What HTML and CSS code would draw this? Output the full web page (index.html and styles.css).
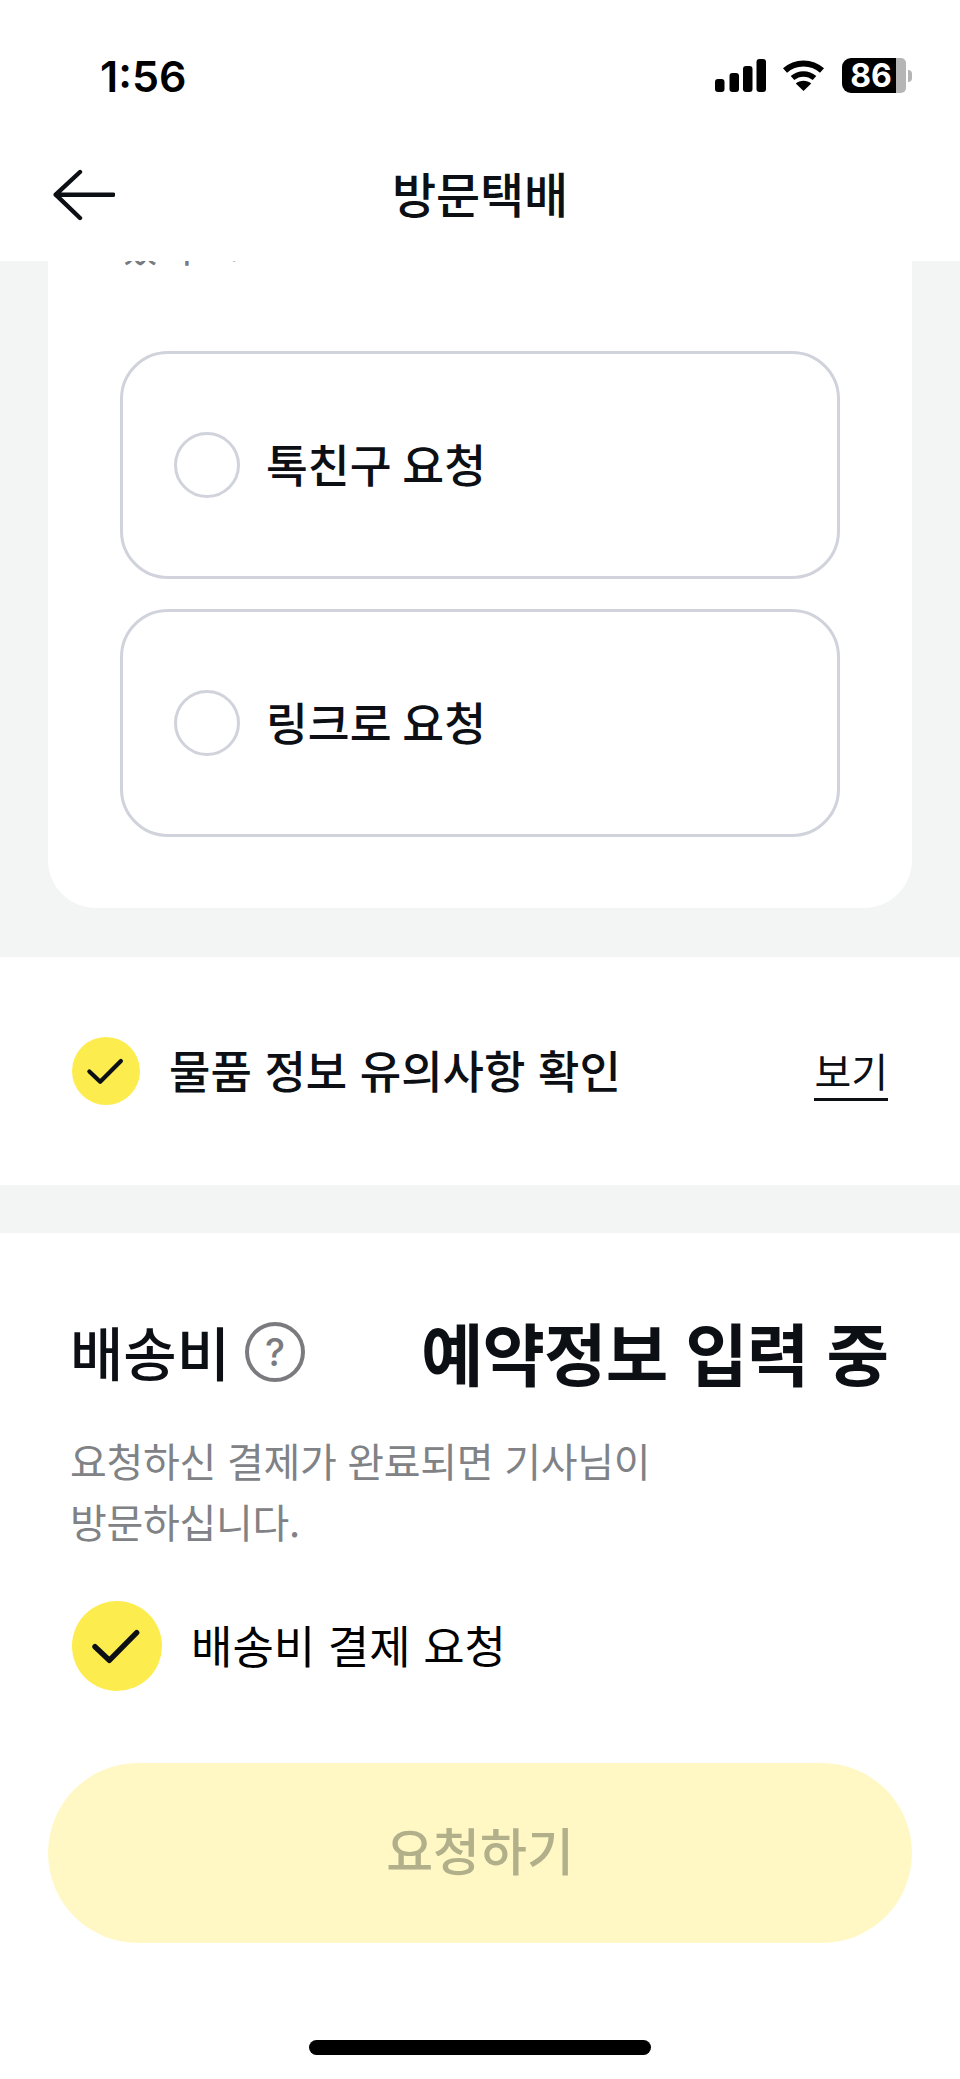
FILE: index.html
```html
<!DOCTYPE html>
<html lang="ko">
<head>
<meta charset="utf-8">
<title>방문택배</title>
<link rel="stylesheet" href="styles.css">
</head>
<body>
<div class="screen">
  <header class="top">
    <div class="status">
      <span class="time">1:56</span>
      <div class="status-icons">
        <svg class="signal" width="51" height="33" viewBox="0 0 51 33"><rect x="0" y="20" width="9.500" height="13" rx="3"/><rect x="14.500" y="14" width="9.500" height="19" rx="3"/><rect x="28" y="7" width="9.500" height="26" rx="3"/><rect x="41.500" y="0" width="9.500" height="33" rx="3"/></svg>
        <svg class="wifi" width="43" height="31" viewBox="0 0 43 31"><path d="M3 10.500C13.500 1 29.500 1 40 10.500" fill="none" stroke="#000" stroke-width="6"/><path d="M10.500 18C17 12.500 26 12.500 32.500 18" fill="none" stroke="#000" stroke-width="5.500"/><path d="M21.500 31L13.800 23.500C18 19.800 25 19.800 29.200 23.500Z"/></svg>
        <div class="battery"><div class="battery-body"><span class="battery-num">86</span><span class="battery-rest"></span></div><span class="battery-nub"></span></div>
      </div>
    </div>
    <div class="nav">
      <svg class="back" width="62" height="52" viewBox="0 0 62 52"><path d="M27 3L2.700 25.700L27 49M2.700 25.700H60.300" fill="none" stroke="#0c0f14" stroke-width="4.400" stroke-linecap="round" stroke-linejoin="round"/></svg>
      <h1 class="title">방문택배</h1>
    </div>
  </header>

  <main class="content">
    <section class="gray-area">
      <div class="card">
        <p class="clipped">있어요.</p>
        <div class="option"><span class="radio"></span><span class="option-label">톡친구 요청</span></div>
        <div class="option"><span class="radio"></span><span class="option-label">링크로 요청</span></div>
      </div>
    </section>

    <section class="notice">
      <span class="check check-sm"><svg class="tick" viewBox="0 0 90 90"><path d="M23 45.700L37.300 59.300L64.700 31.700" fill="none" stroke="#0c0f14" stroke-linecap="round" stroke-linejoin="round"/></svg></span>
      <span class="notice-text">물품 정보 유의사항 확인</span>
      <a class="view">보기</a>
    </section>

    <section class="fee">
      <div class="fee-head">
        <h2 class="fee-title">배송비</h2>
        <span class="help">?</span>
        <span class="fee-status">예약정보 입력 중</span>
      </div>
      <p class="fee-desc">요청하신 결제가 완료되면 기사님이<br>방문하십니다.</p>
      <div class="fee-check">
        <span class="check check-lg"><svg class="tick" viewBox="0 0 90 90"><path d="M23 45.700L37.300 59.300L64.700 31.700" fill="none" stroke="#0c0f14" stroke-linecap="round" stroke-linejoin="round"/></svg></span>
        <span class="fee-check-text">배송비 결제 요청</span>
      </div>
      <button class="submit">요청하기</button>
      <div class="home-bar"></div>
    </section>
  </main>
</div>
</body>
</html>
```
FILE: styles.css
```css
* { box-sizing: border-box; }
html, body { margin: 0; padding: 0; background: #fff; }
body { font-family: "Noto Sans CJK KR", "Noto Sans", sans-serif; color: #0c0f14; }
.screen { width: 960px; height: 2079px; overflow: hidden; display: flex; flex-direction: column; }

.top { height: 261px; flex: none; background: #fff; position: relative; z-index: 2; }
.status { height: 150px; padding: 0 48px 0 100px; display: flex; justify-content: space-between; align-items: flex-start; }
.time { font-family: Inter, "Liberation Sans", sans-serif; font-weight: 600; font-size: 43px; line-height: 50px; margin-top: 51px; color: #000; }
.status-icons { display: flex; align-items: flex-start; margin-top: 58px; }
.signal { margin-top: 1px; margin-right: 16px; }
.wifi { margin-top: 2px; margin-right: 17px; }
.battery { display: flex; align-items: center; height: 35px; }
.battery-body { width: 64px; height: 35px; display: flex; }
.battery-num { width: 54px; flex: none; border-radius: 9px 0 0 9px; background: #000; color: #fff; font-family: Inter, "Liberation Sans", sans-serif; font-weight: 700; font-size: 32px; line-height: 35px; text-align: center; padding-left: 4px; }
.battery-rest { width: 10px; flex: none; border-radius: 0 5px 5px 0; background: #b5b5b5; }
.battery-nub { width: 4px; height: 12px; margin-left: 2px; border-radius: 0 6px 6px 0; background: #b5b5b5; }

.nav { height: 111px; display: flex; align-items: flex-start; justify-content: center; position: relative; }
.back { position: absolute; left: 53px; top: 19px; }
.title { margin: 7px 0 0; font-size: 48px; line-height: 70px; font-weight: 500; letter-spacing: -0.2px; }

.content { flex: 1; display: flex; flex-direction: column; background: #f3f5f4; }
.gray-area { height: 696px; flex: none; padding: 0 48px; overflow: hidden; }
.card { display: flow-root; height: 647px; padding: 0 72px; background: #fff; border-radius: 0 0 48px 48px; }
.clipped { margin: -39px 0 0; height: 129px; font-size: 40px; line-height: 46px; color: #777a80; padding-left: 1px; letter-spacing: -1px; }
.option { height: 228px; margin-bottom: 30px; border: 3px solid #d1d3dc; border-radius: 48px; display: flex; align-items: center; padding-left: 51px; }
.radio { width: 66px; height: 66px; border: 3px solid #d1d3dc; border-radius: 50%; flex: none; }
.option-label { margin: 0 0 5px 26px; font-size: 45.500px; line-height: 60px; font-weight: 500; word-spacing: -2px; }

.notice { height: 228px; flex: none; display: flex; align-items: center; padding: 0 72px; background: #fff; }
.check { display: flex; align-items: center; justify-content: center; flex: none; border-radius: 50%; background: #fdec4e; }
.check-sm { width: 68px; height: 68px; }
.check-lg { width: 90px; height: 90px; }
.tick { width: 100%; height: 100%; }
.check-sm .tick path { stroke-width: 5.600; }
.check-lg .tick path { stroke-width: 5.400; }
.notice-text { margin: 0 0 2px 29px; font-size: 45px; line-height: 60px; font-weight: 500; flex: 1; }
.view { font-size: 40px; line-height: 56px; font-weight: 400; border-bottom: 3px solid #0c0f14; color: #0c0f14; }

.fee { flex: 1; margin-top: 48px; padding: 0 48px; background: #fff; position: relative; }
.fee-head { display: flex; align-items: center; height: 66px; margin: 86px 24px 3px 22px; }
.fee-title { margin: 0 0 3px; font-size: 58px; line-height: 66px; font-weight: 500; }
.help { width: 60px; height: 60px; margin-left: 15px; flex: none; border: 4px solid #7b7b7f; border-radius: 50%; color: #7b7b7f; font-family: Inter, sans-serif; font-size: 38px; font-weight: 500; line-height: 52px; text-align: center; }
.fee-status { margin-left: auto; font-size: 68px; line-height: 66px; font-weight: 700; letter-spacing: -1px; }
.fee-desc { margin: 45px 0 0 22px; font-size: 40px; line-height: 61px; color: #808286; font-weight: 400; letter-spacing: -0.300px; }
.fee-check { display: flex; align-items: center; margin: 49px 0 0 24px; }
.fee-check-text { margin: 0 0 3px 29px; font-size: 45px; line-height: 60px; color: #000; font-weight: 400; }
.submit { display: block; width: 864px; height: 180px; margin-top: 72px; padding: 0 0 9px; border: 0; border-radius: 90px; background: #fff8c5; color: #b2af8b; font-family: inherit; font-size: 51px; font-weight: 500; }
.home-bar { width: 342px; height: 15px; margin: 97px auto 0; border-radius: 8px; background: #000; }
```
